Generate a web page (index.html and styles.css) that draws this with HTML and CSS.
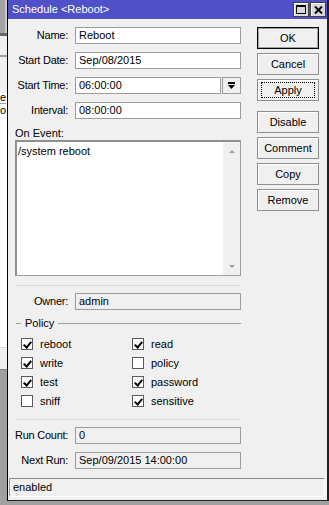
FILE: index.html
```html
<!DOCTYPE html>
<html lang="en">
<head>
    <meta charset="UTF-8">
    <meta name="viewport" content="width=device-width, initial-scale=1.0">
    <title>Schedule &lt;Reboot&gt;</title>
    <link rel="stylesheet" href="styles.css">
</head>
<body>
<div class="desk">

    <!-- edge of the window lying behind -->
    <div class="behind">
        <div class="bh-top"></div>
        <div class="bh-bar"></div>
        <div class="bh-panel"></div>
        <div class="bh-list">
            <span class="bh-txt">e</span>
            <span class="bh-txt bh-txt2">o</span>
        </div>
        <div class="bh-foot"></div>
        <div class="bh-rest"></div>
    </div>

    <div class="window">
        <div class="titlebar">
            <span class="title">Schedule &lt;Reboot&gt;</span>
            <div class="tb-btns">
                <span class="tb-btn">
                    <svg width="10" height="9" viewBox="0 0 10 9"><rect x="0.5" y="0.5" width="9" height="8" fill="none" stroke="#000"/><rect x="0" y="0" width="10" height="2" fill="#000"/></svg>
                </span>
                <span class="tb-btn">
                    <svg width="9" height="8" viewBox="0 0 9 8"><path d="M1 0.5 L8 7.5 M8 0.5 L1 7.5" stroke="#000" stroke-width="2"/></svg>
                </span>
            </div>
        </div>

        <div class="content">
            <div class="form">
                <div class="row">
                    <span class="label">Name:</span>
                    <div class="field">Reboot</div>
                </div>
                <div class="row">
                    <span class="label">Start Date:</span>
                    <div class="field">Sep/08/2015</div>
                </div>
                <div class="row">
                    <span class="label">Start Time:</span>
                    <div class="field-combo">
                        <div class="field">06:00:00</div>
                        <div class="drop">
                            <svg width="9" height="9" viewBox="0 0 9 9"><rect x="1" y="1" width="7" height="2" fill="#000"/><polygon points="1,4 8,4 4.5,8" fill="#000"/></svg>
                        </div>
                    </div>
                </div>
                <div class="row">
                    <span class="label">Interval:</span>
                    <div class="field">08:00:00</div>
                </div>

                <div class="event-label">On Event:</div>
                <div class="memo">
                    <div class="memo-text">/system reboot</div>
                    <div class="scroll">
                        <span class="arr-up"></span>
                        <span class="arr-down"></span>
                    </div>
                </div>

                <div class="sep"></div>

                <div class="row row-owner">
                    <span class="label">Owner:</span>
                    <div class="field ro">admin</div>
                </div>

                <div class="legend">
                    <span class="lg-dash"></span>
                    <span class="lg-text">Policy</span>
                    <span class="lg-line"></span>
                </div>
                <div class="checks">
                    <div class="chk"><span class="box on"></span>reboot</div>
                    <div class="chk"><span class="box on"></span>read</div>
                    <div class="chk"><span class="box on"></span>write</div>
                    <div class="chk"><span class="box"></span>policy</div>
                    <div class="chk"><span class="box on"></span>test</div>
                    <div class="chk"><span class="box on"></span>password</div>
                    <div class="chk"><span class="box"></span>sniff</div>
                    <div class="chk"><span class="box on"></span>sensitive</div>
                </div>

                <div class="sep sep2"></div>

                <div class="row row-run">
                    <span class="label">Run Count:</span>
                    <div class="field ro">0</div>
                </div>
                <div class="row row-last">
                    <span class="label">Next Run:</span>
                    <div class="field ro">Sep/09/2015 14:00:00</div>
                </div>
            </div>

            <div class="buttons">
                <div class="btn btn-default">OK</div>
                <div class="btn">Cancel</div>
                <div class="btn btn-focus"><span>Apply</span></div>
                <div class="btn btn-gap">Disable</div>
                <div class="btn">Comment</div>
                <div class="btn">Copy</div>
                <div class="btn">Remove</div>
            </div>
        </div>

        <div class="status">enabled</div>
    </div>
</div>
</body>
</html>
```

FILE: styles.css
```css
* {
    box-sizing: border-box;
}
body {
    margin: 0;
    background: #a0a0a0;
    font-family: "Liberation Sans", Arial, sans-serif;
    font-size: 11px;
    color: #000;
}
.desk {
    display: flex;
    width: 329px;
    height: 505px;
    overflow: hidden;
}

/* window behind */
.behind {
    width: 7px;
    display: flex;
    flex-direction: column;
    overflow: hidden;
}
.bh-top {
    height: 33px;
    background: #a3a3a3;
    border-right: 2px solid #c8c8c8;
}
.bh-bar {
    height: 3px;
    background: #696969;
}
.bh-panel {
    height: 21px;
    background: #f0f0f0;
    border-bottom: 2px solid #a0a0a0;
}
.bh-list {
    height: 290px;
    background: #fff;
    border-top: 36px solid #f0f0f0;
    position: relative;
}
.bh-txt {
    position: absolute;
    left: 0;
    top: -2px;
    line-height: 12px;
}
.bh-txt2 {
    top: 10px;
    border-top: 1px solid #a0a0a0;
}
.bh-foot {
    height: 22px;
    background: #f0f0f0;
    border-top: 1px solid #d8d8d8;
}
.bh-rest {
    flex: 1;
    background: #a0a0a0;
    border-top: 1px solid #808080;
}

/* window */
.window {
    width: 322px;
    height: 501px;
    background: #f0f0f0;
    border-left: 1px solid #000;
    border-right: 2px solid #202020;
    border-bottom: 1px solid #202020;
    display: flex;
    flex-direction: column;
}
.titlebar {
    height: 19px;
    background: #5050c8;
    display: flex;
    align-items: center;
    justify-content: space-between;
    padding: 0 1px 0 4px;
}
.title {
    color: #fff;
    line-height: 19px;
}
.tb-btns {
    display: flex;
    gap: 1px;
}
.tb-btn {
    width: 16px;
    height: 15px;
    background: #d8d8d8;
    border: 1px solid #404040;
    box-shadow: inset 1px 1px 0 #fff;
    display: flex;
    align-items: center;
    justify-content: center;
}

.content {
    display: flex;
    gap: 16px;
    padding: 8px 7px 0 7px;
}
.form {
    width: 226px;
}
.row {
    display: flex;
    gap: 7px;
    height: 17px;
    margin-bottom: 8px;
}
.row-last {
    margin-bottom: 0;
}
.label {
    width: 53px;
    text-align: right;
    line-height: 17px;
    white-space: nowrap;
    letter-spacing: -0.25px;
}
.field {
    flex: 1;
    height: 17px;
    background: #fff;
    border: 1px solid #9c9c9c;
    padding: 0 3px;
    line-height: 15px;
    white-space: nowrap;
}
.field.ro {
    background: #f0f0f0;
}
.field-combo {
    flex: 1;
    display: flex;
    gap: 1px;
}
.drop {
    width: 19px;
    height: 17px;
    border: 1px solid #9c9c9c;
    background: #f0f0f0;
    display: flex;
    align-items: center;
    justify-content: center;
}

.event-label {
    height: 13px;
    line-height: 13px;
}
.memo {
    display: flex;
    height: 136px;
    background: #fff;
    border: 1px solid #a0a0a0;
    border-top: 2px solid #909090;
    border-left: 2px solid #909090;
}
.memo-text {
    flex: 1;
    padding: 3px 0 0 1px;
    line-height: 13px;
}
.scroll {
    width: 17px;
    background: #f0f0f0;
    display: flex;
    flex-direction: column;
    justify-content: space-between;
    align-items: center;
    padding: 8px 0 7px;
}
.arr-up {
    border-left: 3px solid transparent;
    border-right: 3px solid transparent;
    border-bottom: 3px solid #a0a0a0;
}
.arr-down {
    border-left: 3px solid transparent;
    border-right: 3px solid transparent;
    border-top: 3px solid #a0a0a0;
}

.sep {
    height: 1px;
    background: #dadada;
    margin-top: 9px;
}
.row-owner {
    margin-top: 7px;
    margin-bottom: 7px;
}

.legend {
    display: flex;
    align-items: center;
    height: 13px;
}
.lg-dash {
    width: 5px;
    height: 1px;
    background: #a0a0a0;
    margin-left: 1px;
}
.lg-text {
    padding: 0 4px 0 4px;
    line-height: 13px;
}
.lg-line {
    flex: 1;
    height: 1px;
    background: #a0a0a0;
}
.checks {
    display: grid;
    grid-template-columns: 111px 1fr;
    margin-top: 4px;
    padding-left: 6px;
}
.chk {
    display: flex;
    align-items: center;
    height: 19px;
}
.box {
    width: 12px;
    height: 12px;
    border: 1px solid #5a5a5a;
    background: #fff;
    margin-right: 7px;
    position: relative;
}
.box.on::after {
    content: "";
    position: absolute;
    left: 3px;
    top: 1px;
    width: 3px;
    height: 6px;
    border-right: 2px solid #000;
    border-bottom: 2px solid #000;
    transform: rotate(40deg);
}
.sep2 {
    margin-left: 1px;
}
.row-run {
    margin-top: 7px;
}

.buttons {
    width: 62px;
    display: flex;
    flex-direction: column;
    gap: 4px;
}
.btn {
    height: 22px;
    border: 1px solid #8f8f8f;
    background: #f0f0f0;
    box-shadow: inset 1px 1px 0 #fff;
    display: flex;
    align-items: center;
    justify-content: center;
}
.btn-default {
    border-color: #000;
    box-shadow: inset 0 0 0 1px #a0a0a0;
}
.btn-focus span {
    border: 1px dotted #000;
    width: 54px;
    height: 16px;
    line-height: 14px;
    text-align: center;
}
.btn-gap {
    margin-top: 6px;
}

.status {
    margin: 9px 2px 3px 1px;
    height: 19px;
    border: 1px solid #fff;
    border-top-color: #8c8c8c;
    border-left-color: #a0a0a0;
    padding-left: 3px;
    line-height: 17px;
}
```
